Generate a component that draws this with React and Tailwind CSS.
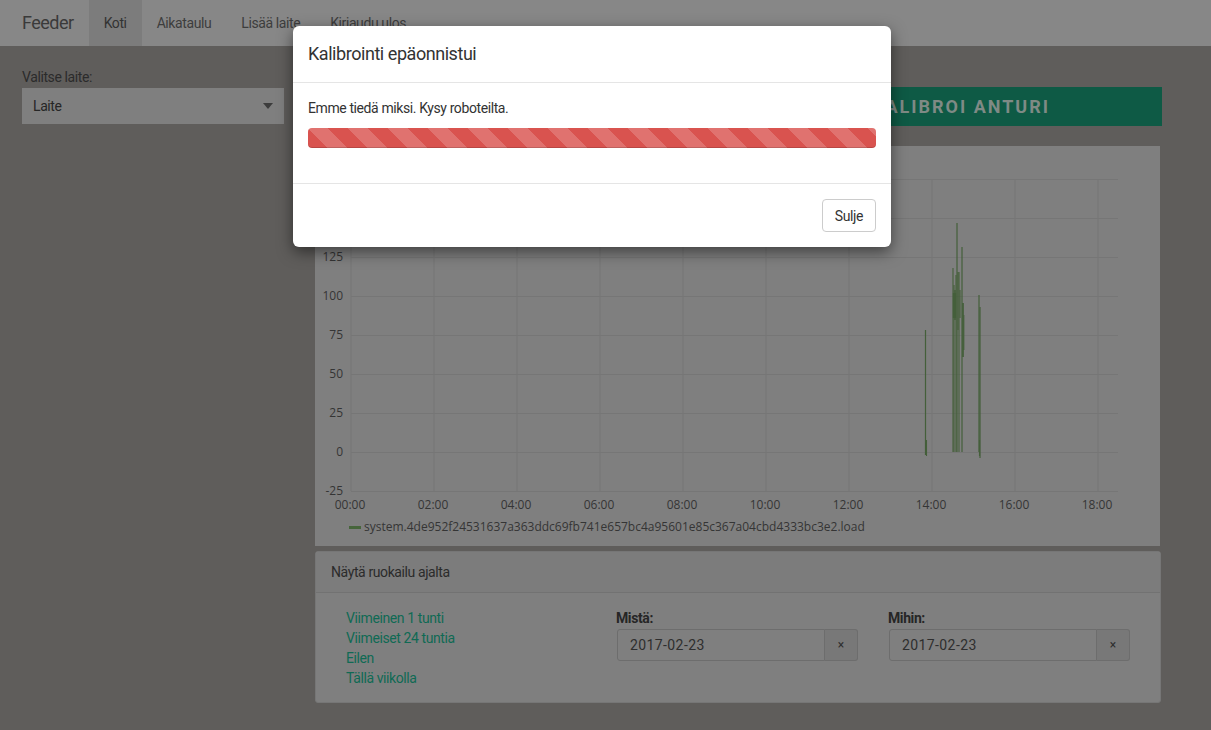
const PX = 315;
const PY = 146;
const y0 = 452 - PY;
const ys = 39 / 25;
const vy = (v) => y0 - v * ys;
const hx = (h) => 350 - PX + h * 41.5;

const yTicks = [175, 150, 125, 100, 75, 50, 25, 0, -25];
const xTicks = [0, 2, 4, 6, 8, 10, 12, 14, 16, 18];

const spikes = [
  [925.5, 330, 455, 1.2],
  [926.5, 440, 456, 1.1],
  [953, 268, 452, 1.1],
  [954, 285, 452, 1.1],
  [955, 290, 320, 1.4],
  [956, 275, 452, 1.1],
  [957, 223, 452, 1.2],
  [958, 272, 330, 1.1],
  [959, 272, 452, 1.1],
  [954.5, 293, 318, 3.2],
  [960, 290, 318, 1.1],
  [962, 247, 452, 1.2],
  [963, 303, 357, 1.7],
  [963.8, 315, 350, 1.1],
  [979, 295, 452, 1.2],
  [980, 307, 458, 1.2],
  [979.5, 440, 456, 1.1],
];

function Chart() {
  return (
    <svg width="845" height="400" className="block tracking-normal" style={{ fontFamily: "'Open Sans', sans-serif" }}>
      {yTicks.map((v) => (
        <line key={"h" + v} x1={36} x2={803} y1={vy(v) + 0.5} y2={vy(v) + 0.5} stroke="#767676" strokeWidth="1" />
      ))}
      {xTicks.map((h) => (
        <line key={"v" + h} x1={hx(h) + 1} x2={hx(h) + 1} y1={vy(175)} y2={vy(-25)} stroke="#767676" strokeWidth="1" />
      ))}
      {yTicks.map((v) => (
        <text key={"yl" + v} x={28} y={vy(v) + 4} textAnchor="end" fontSize="12" fill="#353535">
          {v}
        </text>
      ))}
      {xTicks.map((h) => (
        <text key={"xl" + h} x={hx(h)} y={363} textAnchor="middle" fontSize="12" fill="#353535">
          {String(h).padStart(2, "0") + ":00"}
        </text>
      ))}
      {spikes.map(([x, a, b, w], i) => (
        <line key={"s" + i} x1={x - PX} x2={x - PX} y1={a - PY} y2={b - PY} stroke="#445f3a" strokeWidth={w} />
      ))}
      <rect x={34} y={380} width={12} height={3} fill="#46653b" />
      <text x={49} y={385} fontSize="12" fill="#353535">
        system.4de952f24531637a363ddc69fb741e657bc4a95601e85c367a04cbd4333bc3e2.load
      </text>
    </svg>
  );
}

function DateInput({ label }) {
  return (
    <div className="w-[272px] px-[15px]">
      <div className="h-[21px] font-bold leading-[20px] text-[#262626]">{label}</div>
      <div className="ml-[1px] flex h-[32px] w-[241px]">
        <div className="flex flex-1 items-center rounded-l-[3px] border border-[#6d6d6d] bg-[#7f7f7f] px-[12px] tracking-[0.4px] text-[#2e2e2e]">
          2017-02-23
        </div>
        <div className="flex w-[33px] items-center justify-center rounded-r-[3px] border border-l-0 border-[#6d6d6d] bg-[#787878] text-[12px] tracking-normal text-[#2e2e2e]">
          ×
        </div>
      </div>
    </div>
  );
}

export default function App() {
  return (
    <div className="relative min-h-screen w-full overflow-hidden bg-[#5f5d5b] font-['Roboto',sans-serif] text-[14px] leading-[20px] tracking-[-0.4px] text-[#2b2b2b]">
      <nav className="flex h-[46px] items-stretch bg-[#878787] text-[#3d3d3d]">
        <div className="flex items-center pl-[22px] pr-[15px] text-[18px] tracking-[-0.5px] text-[#3a3a3a]">Feeder</div>
        <div className="flex items-center bg-[#7c7c7c] px-[15px] text-[#333]">Koti</div>
        <div className="flex items-center px-[15px]">Aikataulu</div>
        <div className="flex items-center px-[15px]">Lisää laite</div>
        <div className="flex items-center px-[15px]">Kirjaudu ulos</div>
      </nav>

      <main className="flex gap-[31px] pl-[22px] pt-[21px]">
        <div className="w-[262px]">
          <div className="mb-[1px] h-[20px] text-[#2b2b2b]">Valitse laite:</div>
          <div className="flex h-[36px] items-center justify-between bg-[#7f7f7f] pl-[11px] pr-[11px] text-[#262626]">
            <span>Laite</span>
            <svg width="10" height="6" viewBox="0 0 10 6">
              <path d="M0 0 L10 0 L5 6 Z" fill="#3c3c3c" />
            </svg>
          </div>
        </div>

        <div className="mt-[20px] w-[847px]">
          <div className="flex">
            <div className="ml-auto flex h-[39px] w-[402px] items-center justify-center bg-[#0e5a45] text-[18px] font-bold tracking-[2px] text-[#7f8a85]">
              KALIBROI ANTURI
            </div>
          </div>

          <div className="mt-[20px] h-[400px] w-[845px] bg-[#7f7f7f]">
            <Chart />
          </div>

          <div className="mt-[5px] h-[152px] w-[846px] rounded-[3px] border border-[#767676] bg-[#7f7f7f]">
            <div className="flex h-[41px] items-center border-b border-[#727272] bg-[#7c7c7c] px-[15px] text-[#2b2b2b]">
              Näytä ruokailu ajalta
            </div>
            <div className="flex px-[15px] pt-[15px]">
              <div className="w-[272px] pl-[15px] text-[#0f6a54]">
                <div>Viimeinen 1 tunti</div>
                <div>Viimeiset 24 tuntia</div>
                <div>Eilen</div>
                <div>Tällä viikolla</div>
              </div>
              <DateInput label="Mistä:" />
              <DateInput label="Mihin:" />
            </div>
          </div>
        </div>
      </main>

      <div className="absolute left-[293px] top-[26px] w-[598px] rounded-[6px] bg-white shadow-[0_5px_15px_rgba(0,0,0,0.5)]">
        <div className="flex h-[57px] items-center border-b border-[#e5e5e5] px-[15px] text-[18px] tracking-[-0.45px] text-[#333]">
          Kalibrointi epäonnistui
        </div>
        <div className="px-[15px] pt-[15px] pb-[15px] text-[#333]">
          <div className="mb-[10px]">Emme tiedä miksi. Kysy roboteilta.</div>
          <div className="mb-[20px] h-[20px] rounded-[4px] bg-[#d9534f] bg-[linear-gradient(45deg,rgba(255,255,255,.18)_25%,transparent_25%,transparent_50%,rgba(255,255,255,.18)_50%,rgba(255,255,255,.18)_75%,transparent_75%,transparent)] bg-[length:40px_40px] shadow-[inset_0_-1px_0_rgba(0,0,0,0.15)]" />
        </div>
        <div className="flex justify-end border-t border-[#e5e5e5] p-[15px]">
          <button className="h-[33px] rounded-[4px] border border-[#cccccc] bg-white px-[12px] text-[14px] text-[#333]">
            Sulje
          </button>
        </div>
      </div>
    </div>
  );
}
